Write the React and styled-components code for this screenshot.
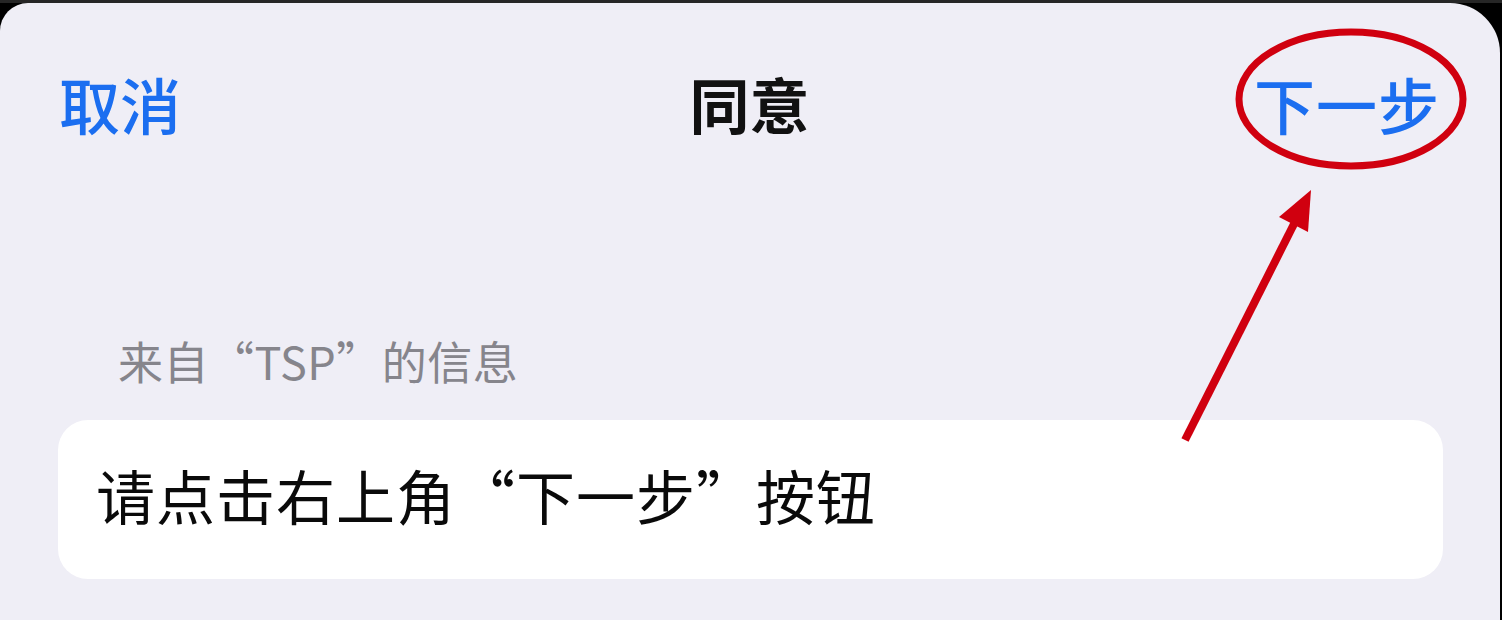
import React from "react";
import styled, { createGlobalStyle } from "styled-components";

const GlobalStyle = createGlobalStyle`
  html, body {
    margin: 0;
    padding: 0;
    background: #000;
  }
  body {
    font-family: "Noto Sans CJK SC", "Noto Sans", sans-serif;
  }
`;

const Screen = styled.div`
  width: 1502px;
  height: 620px;
  background: #000;
  border-top: 3px solid #262626;
  box-sizing: border-box;
  overflow: hidden;
`;

const Sheet = styled.div`
  position: relative;
  width: 1500px;
  height: 617px;
  background: #efeef6;
  border-radius: 28px 50px 0 0;
  display: flex;
  flex-direction: column;
`;

const NavBar = styled.div`
  height: 200px;
  display: grid;
  grid-template-columns: 1fr auto 1fr;
  align-items: center;
  padding: 0 60px 0 59px;
`;

const NavButton = styled.div`
  font-size: 61px;
  line-height: 1;
  font-weight: 500;
  color: #1b6ef0;
  letter-spacing: ${(p) => (p.$right ? "1px" : "0")};
  justify-self: ${(p) => (p.$right ? "end" : "start")};
`;

const NavTitle = styled.div`
  font-size: 60px;
  line-height: 1;
  font-weight: 700;
  color: #111;
`;

const SectionLabel = styled.div`
  margin: 135px 0 0 118px;
  font-size: 45px;
  line-height: 1;
  letter-spacing: 0.5px;
  color: #86858c;
`;

const Card = styled.div`
  margin: 37px 57px 0 58px;
  height: 159px;
  box-sizing: border-box;
  background: #fff;
  border-radius: 30px;
  display: flex;
  align-items: center;
  padding: 0 0 10px 38px;
`;

const CardText = styled.div`
  font-size: 59px;
  line-height: 1;
  letter-spacing: 1px;
  color: #0a0a0a;
`;

const Annotation = styled.svg`
  position: absolute;
  left: 0;
  top: -3px;
  width: 1502px;
  height: 620px;
  pointer-events: none;
`;

export default function App() {
  return (
    <>
      <GlobalStyle />
      <Screen>
        <Sheet>
          <NavBar>
            <NavButton>取消</NavButton>
            <NavTitle>同意</NavTitle>
            <NavButton $right>下一步</NavButton>
          </NavBar>
          <SectionLabel>来自“TSP”的信息</SectionLabel>
          <Card>
            <CardText>请点击右上角“下一步”按钮</CardText>
          </Card>
          <Annotation viewBox="0 0 1502 620">
            <ellipse cx="1351" cy="99" rx="112" ry="67" fill="none" stroke="#d0000f" strokeWidth="7" />
            <line x1="1185" y1="440" x2="1297" y2="218" stroke="#d0000f" strokeWidth="8" />
            <polygon points="1311,190 1279,217 1308,232" fill="#d0000f" />
          </Annotation>
        </Sheet>
      </Screen>
    </>
  );
}
